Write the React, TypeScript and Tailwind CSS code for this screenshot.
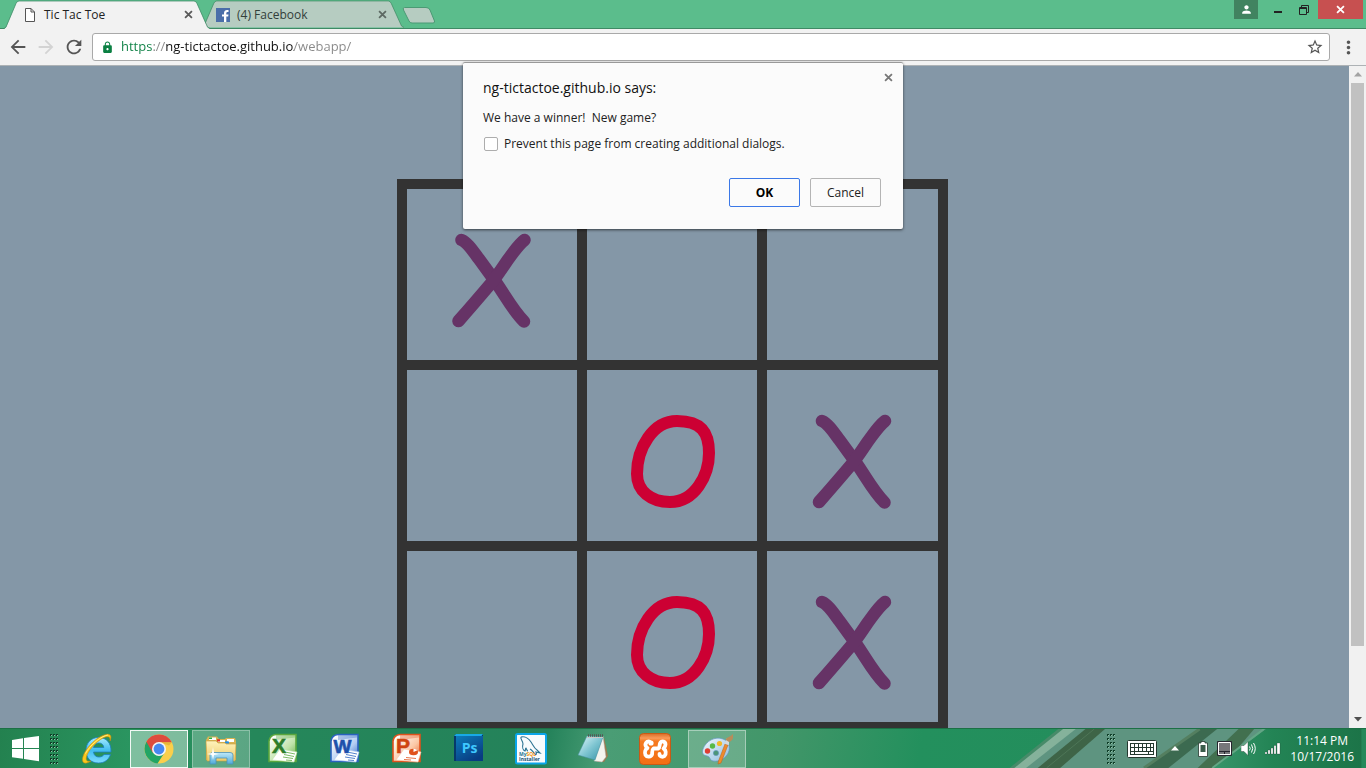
import { useState, type ReactNode } from "react";
import {
  MdArrowBack,
  MdArrowForward,
  MdLock,
  MdMoreVert,
  MdPerson,
  MdRefresh,
  MdStarBorder,
} from "react-icons/md";

type Mark = "X" | "O" | null;

const board: Mark[] = ["X", null, null, null, "O", "X", null, "O", "X"];

function CloseGlyph({ className }: { className?: string }) {
  return (
    <svg viewBox="0 0 10 10" className={className} fill="none" stroke="currentColor" aria-hidden="true">
      <path d="M1.2 1.2 8.8 8.8M8.8 1.2 1.2 8.8" />
    </svg>
  );
}

function TabShape({ active }: { active?: boolean }) {
  return (
    <svg
      viewBox="0 0 206 29"
      preserveAspectRatio="none"
      className="absolute inset-0 h-full w-full"
      aria-hidden="true"
    >
      <path
        d={active ? "M0 29 2 27.5 12 3.5Q13 1 15 1H190Q192 1 193 3.5L203.500 27.500 206 29Z" : "M0 28.500 2 27 12 3.5Q13 1 15 1H190Q192 1 193 3.5L203.500 27 206 28.500Z"}
        fill={active ? "#f2f2f2" : "#b6ccc1"}
      />
      <path d="M0 28.500 2 27 12 3.5Q13 1 15 1H190Q192 1 193 3.5L203.500 27 206 28.500" fill="none" stroke="#3f8a65" strokeOpacity="0.75" />
    </svg>
  );
}

function MarkDrawing({ mark }: { mark: Mark }) {
  if (mark === "X")
    return (
      <svg viewBox="0 0 170 171" className="h-full w-full" fill="none" stroke="#663366" strokeWidth="12.500" strokeLinecap="round" strokeLinejoin="round">
        <path d="M54.500 51C60 53 66 62 72 70L88 92C98 106 106 122 117 132.500" />
        <path d="M117.500 51C111 56 106 64 100 72C96 78 92 84 86 92C75 105 63 119 51.500 132" />
      </svg>
    );
  if (mark === "O")
    return (
      <svg viewBox="0 0 170 171" className="h-full w-full" fill="none" stroke="#cc0033" strokeWidth="12">
        <path d="M90 51C66 51 50 78 50 104C50 121 64 132 83 132C108 132 122 105 122 83C122 62 114 51 90 51Z" />
      </svg>
    );
  return null;
}

function WindowsLogo() {
  return (
    <svg viewBox="0 0 28 26" className="h-[26px] w-7" fill="#fff">
      <path d="M0 4 11 2.300V12H0ZM12 2.100 27 0V12H12ZM0 13H11V22.800L0 21.200ZM12 13H27V25.300L12 23Z" />
    </svg>
  );
}

function Icon({ children }: { children: ReactNode }) {
  return (
    <svg viewBox="0 0 32 32" className="size-8" aria-hidden="true">
      {children}
    </svg>
  );
}

function IeIcon() {
  return (
    <Icon>
      <defs>
        <linearGradient id="ie" x1="0" y1="0" x2="0" y2="1">
          <stop offset="0" stopColor="#a6ecff" />
          <stop offset="0.5" stopColor="#41bdf0" />
          <stop offset="1" stopColor="#7edcff" />
        </linearGradient>
      </defs>
      <path
        d="M30 19H12.500C13 22.500 15 24 18 24C20.500 24 22 23 23 21.500H29.500C27.500 27 23.500 30 17.500 30C10 30 5 25 5 17.500C5 10 10 4.500 17.500 4.500C25.500 4.500 30.500 10 30 19ZM12.500 14.500H22.800C22.500 11.500 20.500 10 17.800 10C15 10 13 11.500 12.500 14.500Z"
        fill="url(#ie)"
        stroke="#1c7fc0"
        strokeWidth="0.8"
      />
      <path d="M29 8C31 3 29.500 0.500 25 1.500C19 2.500 9 10 4 19C0 26 1 31 5.500 30C7 29.700 8.500 29 10 28C6 29 4 27.500 6 22C9 15 18 6 24.500 4C28 3 29.500 4.500 29 8Z" fill="#fbc91c" stroke="#c98c0b" strokeWidth="0.6" />
      <path d="M27 2C20 3 9 12 4.500 20.500" fill="none" stroke="#fff3a0" strokeWidth="0.8" />
    </Icon>
  );
}

function ChromeIcon() {
  return (
    <Icon>
      <circle cx="16" cy="16" r="14.500" fill="#fbcf4b" />
      <path d="M16 16 3.400 8.800A14.500 14.500 0 0 0 14.500 30.400L22 19Z" fill="#22a565" />
      <path d="M16 16 9.500 19.500 3.400 8.800A14.500 14.500 0 0 1 28.800 9.300H16Z" fill="#dd4b3e" />
      <path d="M16 9.300H28.800L26 12.500Z" fill="#d9a92f" opacity="0.6" />
      <circle cx="16" cy="16" r="7" fill="#f4f4f4" />
      <circle cx="16" cy="16" r="5.400" fill="#4688f1" />
    </Icon>
  );
}

function ExplorerIcon() {
  return (
    <Icon>
      <defs>
        <linearGradient id="folder" x1="0" y1="0" x2="0" y2="1">
          <stop offset="0" stopColor="#fff3bd" />
          <stop offset="1" stopColor="#eccb68" />
        </linearGradient>
        <linearGradient id="stand" x1="0" y1="0" x2="0" y2="1">
          <stop offset="0" stopColor="#bfe9f8" />
          <stop offset="1" stopColor="#4fa9d8" />
        </linearGradient>
      </defs>
      <path d="M1 7 3 3.500H12L14 6H20L21 5H30L31 8V27H1Z" fill="#d8b453" />
      <path d="M4 4.500H11V7H4ZM13 7H20V9H13ZM22 6H29V9H22Z" fill="#fff" />
      <path d="M4 4.500H7V6H4Z" fill="#2bb33c" />
      <path d="M12 6.500H15V8H12Z" fill="#dc3527" />
      <path d="M20 8.500H23V10H20Z" fill="#288ee0" />
      <path d="M1 8H11L13 10H20L21 11H31L30 28H2Z" fill="url(#folder)" stroke="#c79e3c" strokeWidth="0.6" />
      <path d="M12 6.500H15V8.500H12Z" fill="#dc3527" />
      <path d="M21 8.500H24V10.500H21Z" fill="#288ee0" />
      <path d="M5 31V22Q5 19.500 8 19.500H25Q28 19.500 28 22V31H22V25H11V31Z" fill="url(#stand)" stroke="#4b92b8" strokeWidth="0.8" />
      <path d="M8 14 9 20 14 21 9 22 8 27 7 22 2 21 7 20Z" fill="#fff" />
    </Icon>
  );
}

function OfficeIcon({ letter, dark, light, pale }: { letter: string; dark: string; light: string; pale: string }) {
  return (
    <Icon>
      <defs>
        <linearGradient id={`office-${letter}`} x1="0" y1="0" x2="1" y2="1">
          <stop offset="0.1" stopColor="#fff" />
          <stop offset="0.6" stopColor={pale} />
          <stop offset="1" stopColor={light} />
        </linearGradient>
      </defs>
      <path d="M9 1.500H29V28.500H2V8Q3 2 9 1.500Z" fill={`url(#office-${letter})`} stroke={light} strokeWidth="1.600" />
      <path d="M9 2H28V4.500L9 7Z" fill={light} opacity="0.35" />
      <path d="M13 16 30 19 27 29 5 27Z" fill="#fff" stroke={pale} strokeWidth="0.6" />
      {letter === "P" ? (
        <g>
          <ellipse cx="22.500" cy="19" rx="4.500" ry="3.300" fill={light} />
          <path d="M22.500 19V15.500L27 17Z" fill="#fff" />
          <path d="M15 24.500 25 25.500M13 26.500 20 27" stroke={light} strokeWidth="0.8" />
        </g>
      ) : (
        <path d="M18 19 28 21M17 21.500 27 23.500M16 24 26 25.500M19 27 25 27.500" stroke={light} strokeWidth="0.8" fill="none" />
      )}
      <text
        x={letter === "W" ? 13.5 : 12}
        y="20"
        textAnchor="middle"
        fontFamily="Liberation Sans, sans-serif"
        fontWeight="700"
        fontSize={letter === "W" ? 19 : 21}
        fill={dark}
        stroke={dark}
        strokeWidth="0.6"
      >
        {letter}
      </text>
    </Icon>
  );
}

function PhotoshopIcon() {
  return (
    <Icon>
      <defs>
        <linearGradient id="ps" x1="0" y1="0" x2="0.6" y2="1">
          <stop offset="0" stopColor="#0d7cba" />
          <stop offset="1" stopColor="#083c82" />
        </linearGradient>
      </defs>
      <path d="M1 3 3 1H30V26L28 28H1Z" fill="#06396b" />
      <path d="M1 3 3 1H30L28.500 3Z" fill="#18a9e6" />
      <path d="M3 3H30V28H3Z" fill="url(#ps)" />
      <text x="16.500" y="20" textAnchor="middle" fontFamily="Open Sans, sans-serif" fontWeight="700" fontSize="14" fill="#3fc8ff">
        Ps
      </text>
    </Icon>
  );
}

function MySqlIcon() {
  return (
    <Icon>
      <rect x="1" y="1" width="30" height="29.500" rx="1.500" fill="#f7fbfd" stroke="#0aa5e8" strokeWidth="2" />
      <path d="M6 4C10 3 14 6 16 9C18 12 19 15 22 17L25 20L21 19C22 21 21 22 20 21C18 19 17 17 15 16M6 4C5 6 8 8 8 11C7 14 8 17 10 18C11 17 10 15 11 15C12 17 12 18 13 18" fill="none" stroke="#2b7393" strokeWidth="1.100" />
      <text x="4" y="23" fontFamily="Open Sans, sans-serif" fontWeight="700" fontSize="5" fill="#2b7393">
        My<tspan fill="#f29111">SQL</tspan>
      </text>
      <text x="4" y="28" fontFamily="Open Sans, sans-serif" fontWeight="700" fontSize="5" fill="#174f72">
        Installer
      </text>
    </Icon>
  );
}

function NotepadIcon() {
  return (
    <Icon>
      <defs>
        <linearGradient id="note" x1="0" y1="0" x2="1" y2="1">
          <stop offset="0" stopColor="#e4f8fb" />
          <stop offset="0.5" stopColor="#80c6d2" />
          <stop offset="1" stopColor="#3593a8" />
        </linearGradient>
      </defs>
      <path d="M27 4 31 23 27 29 20 29Z" fill="#9b7a4c" />
      <path d="M26 3 29 24 25 29 17 28Z" fill="#f4f4ee" stroke="#a9aaa6" strokeWidth="0.5" />
      <path d="M10 3 26 4 18 27 1 22Z" fill="url(#note)" stroke="#46919d" strokeWidth="0.5" />
      <path d="M11 2.500H27" stroke="#555" strokeWidth="2.500" strokeDasharray="1 1" />
      <path d="M10 4.500H26" stroke="#c8c8c4" strokeWidth="1" />
    </Icon>
  );
}

function XamppIcon() {
  return (
    <Icon>
      <defs>
        <linearGradient id="xampp" x1="0" y1="0" x2="0" y2="1">
          <stop offset="0" stopColor="#d96c26" />
          <stop offset="0.15" stopColor="#fa9a58" />
          <stop offset="0.25" stopColor="#f57a20" />
          <stop offset="1" stopColor="#f36f13" />
        </linearGradient>
      </defs>
      <rect x="0.500" y="0.500" width="31" height="31" rx="4" fill="url(#xampp)" stroke="#c85a15" />
      <path
        d="M10.500 8.500C7.500 8 5.500 11 7 13.500C7.500 14.500 8.500 15 8.500 15C6 16.500 5.500 19.500 6.500 22C8 24.500 12 24 13 21.500C13.500 19.500 12.500 17 14.500 15.500H19.500C21 15 20 11.500 21.500 9.500C23 7.500 26.500 8.500 26.500 11.500C26.500 13.500 25.500 14.500 24.500 15.500C27 17 27.500 21 25.500 23C23.500 24.500 20.500 23.500 20.500 21"
        fill="none"
        stroke="#fff"
        strokeWidth="3.800"
        strokeLinecap="round"
        strokeLinejoin="round"
      />
      <circle cx="12" cy="10" r="2.600" fill="#fff" />
    </Icon>
  );
}

function PaintIcon() {
  return (
    <Icon>
      <defs>
        <linearGradient id="palette" x1="0" y1="0" x2="1" y2="1">
          <stop offset="0" stopColor="#f3faff" />
          <stop offset="1" stopColor="#8fbddf" />
        </linearGradient>
      </defs>
      <path d="M2 16C5 8 14 3 22 6C29 8 30 17 26 22C23 26 18 29 12 28C8 27 10 24 6 23C1 22 1 19 2 16Z" fill="url(#palette)" stroke="#5f93bd" strokeWidth="0.7" />
      <circle cx="15" cy="20" r="2.600" fill="#4d9678" stroke="#5f93bd" strokeWidth="0.6" />
      <circle cx="6.500" cy="18" r="2.700" fill="#df3d32" />
      <circle cx="11.500" cy="13" r="2.700" fill="#57b947" />
      <circle cx="18.500" cy="10.500" r="2.600" fill="#f2b92b" />
      <path d="M24 11 27 12 20 30 17 31 17.500 28Z" fill="#ee8a2c" stroke="#b9601b" strokeWidth="0.5" />
      <path d="M24 11 26 5 28 5 28 12Z" fill="#d5dade" />
      <path d="M25 7C25 4 28 5 32 1C33 5 31 8 28 9Z" fill="#b98c5a" />
    </Icon>
  );
}

const apps: { name: string; icon: ReactNode; look: string }[] = [
  { name: "Internet Explorer", icon: <IeIcon />, look: "border-transparent" },
  { name: "Google Chrome", icon: <ChromeIcon />, look: "border-white/90 bg-white/40" },
  { name: "File Explorer", icon: <ExplorerIcon />, look: "border-white/30 bg-white/25" },
  { name: "Excel", icon: <OfficeIcon letter="X" dark="#2d7d2b" light="#5aa73d" pale="#bfe3a9" />, look: "border-transparent" },
  { name: "Word", icon: <OfficeIcon letter="W" dark="#1d50ab" light="#2a62c0" pale="#b3cdf3" />, look: "border-transparent" },
  { name: "PowerPoint", icon: <OfficeIcon letter="P" dark="#cf4410" light="#e0521c" pale="#fbc7a4" />, look: "border-transparent" },
  { name: "Photoshop", icon: <PhotoshopIcon />, look: "border-transparent" },
  { name: "MySQL Installer", icon: <MySqlIcon />, look: "border-transparent" },
  { name: "Notepad", icon: <NotepadIcon />, look: "border-transparent" },
  { name: "XAMPP", icon: <XamppIcon />, look: "border-transparent" },
  { name: "Paint", icon: <PaintIcon />, look: "border-white/40 bg-white/20" },
];

function Grip() {
  return (
    <svg viewBox="0 0 9 32" className="h-8 w-[9px]" aria-hidden="true">
      {[0, 4, 8, 12, 16, 20, 24, 28].map((y) =>
        [0, 3, 6].map((x) => (
          <g key={`${x}-${y}`}>
            <rect x={x} y={y + 1} width="2" height="2" fill="#0f3d28" />
            <rect x={x + 1} y={y + 2} width="1" height="1" fill="#8fc4a8" />
          </g>
        )),
      )}
    </svg>
  );
}

function TrayWallpaper() {
  return (
    <svg viewBox="0 0 366 40" className="absolute right-0 top-0 h-full w-[366px]" aria-hidden="true">
      <defs>
        <linearGradient id="trayEnd" x1="0" y1="0" x2="1" y2="0">
          <stop offset="0" stopColor="#37956a" />
          <stop offset="0.4" stopColor="#238455" />
          <stop offset="1" stopColor="#1c7448" />
        </linearGradient>
      </defs>
      <path d="M10 40 60 0H270L214 40Z" fill="#5e9480" />
      <path d="M8 40 58 0H73L22 40Z" fill="#85b29b" />
      <path d="M5 40 55 0H60L10 40Z" fill="#478b69" />
      <path d="M34 40 83 0H103L57 40Z" fill="#3e6447" />
      <path d="M43 40 92 0" stroke="#4e7657" />
      <path d="M143 40 200 0H218L168 40Z" fill="#3c6a50" />
      <path d="M143 40 200 0" stroke="#547f60" strokeWidth="3" />
      <path d="M198 40 240 0H256L222 40Z" fill="#42704f" />
      <path d="M214 40 268 0H366V40Z" fill="url(#trayEnd)" />
      <path d="M213 40 266 0" stroke="#62a785" strokeWidth="2" />
    </svg>
  );
}

export default function App() {
  const [prevent, setPrevent] = useState(false);
  const [url, setUrl] = useState("https://ng-tictactoe.github.io/webapp/");

  return (
    <div className="relative flex h-screen flex-col overflow-hidden font-['Open_Sans','Noto_Sans',sans-serif] text-xs text-[#222]">
      <header className="flex h-[29px] shrink-0 items-start justify-between border-b border-[#3f8a65] bg-[#5bbd8c]">
        <div className="flex pl-1" role="tablist">
          <div role="tab" aria-selected="true" className="relative z-10 flex h-[29px] w-[206px]">
            <TabShape active />
            <div className="relative flex h-[29px] w-full items-center pl-[21px] pr-[17px]">
              <svg viewBox="0 0 10 14" className="h-[14px] w-[10px]" fill="#fff" stroke="#555" aria-hidden="true">
                <path d="M0.500 0.500H6L9.500 4V13.500H0.500ZM6 0.500V4H9.500" />
              </svg>
              <span className="ml-[9px] grow">Tic Tac Toe</span>
              <button aria-label="Close tab" className="text-[#5a5a5a]">
                <CloseGlyph className="size-[9px] stroke-2" />
              </button>
            </div>
          </div>
          <div role="tab" aria-selected="false" className="relative -ml-2 flex h-7 w-[202px]">
            <TabShape />
            <div className="relative flex h-[29px] w-full items-center pl-[14px] pr-[17px]">
              <svg viewBox="0 0 14 14" className="size-[14px]" aria-hidden="true">
                <path d="M0 0H14V14H0Z" fill="#4a6ea9" />
                <path d="M8 14V8.500H6V6.500H8V5C8 3 9.500 2 11 2H12.500V4H11.500Q10.300 4 10.300 5.200V6.500H12.500L12.200 8.500H10.300V14Z" fill="#fff" />
              </svg>
              <span className="ml-[7px] grow text-[#33403a]">(4) Facebook</span>
              <button aria-label="Close tab" className="text-[#5d6963]">
                <CloseGlyph className="size-[9px] stroke-2" />
              </button>
            </div>
          </div>
          <button aria-label="New tab" className="-ml-[2px] mt-[7px] h-[17px] w-[34px]">
            <svg viewBox="0 0 34 17" className="h-full w-full">
              <path d="M2.500 0.500H24Q27 0.500 28 3L32.500 14Q33 16 31 16H10Q8 16 7 14L1.500 3Q0.500 0.500 2.500 0.500Z" fill="#b6ccc1" stroke="#4b9a74" />
            </svg>
          </button>
        </div>
        <div className="flex h-[19px] items-stretch pr-[3px]">
          <button aria-label="Profile" className="flex w-6 items-center justify-center bg-[#418360] text-white">
            <MdPerson className="size-[13px]" />
          </button>
          <button aria-label="Minimize" className="ml-4 flex w-2 items-end pb-[6px]">
            <span className="h-[2px] w-2 bg-[#222]" />
          </button>
          <button aria-label="Restore" className="ml-[17px] mr-[9px] flex items-center">
            <svg viewBox="0 0 10 10" className="size-[10px]" fill="none" stroke="#222">
              <path d="M0.500 2.500H7.500V9.500H0.500ZM0 3.500H8M2.500 2.500V0.500H9.500V7.500H7.500" />
            </svg>
          </button>
          <button aria-label="Close" className="flex w-[45px] items-center justify-center bg-[#c75050] text-white">
            <CloseGlyph className="size-[9px] stroke-2" />
          </button>
        </div>
      </header>

      <div className="flex h-[37px] shrink-0 items-center border-b border-[#adb2b5] bg-[#f2f2f2] pl-[7px] pr-[7px] text-[#555]">
        <button aria-label="Back"><MdArrowBack className="size-[22px]" /></button>
        <button aria-label="Forward" className="ml-[6px] text-[#d3d3d3]"><MdArrowForward className="size-[22px]" /></button>
        <button aria-label="Reload" className="ml-[6px]"><MdRefresh className="size-[22px]" /></button>
        <div className="ml-[7px] flex h-7 grow items-center rounded-[3px] border border-[#a9a9a9] bg-white pl-2 pr-[5px]">
          <MdLock className="size-[13px] text-[#0b8043]" />
          <input
            aria-label="Address"
            value={url}
            onChange={(e) => setUrl(e.target.value)}
            className="ml-[7px] grow bg-[linear-gradient(to_right,#0b8043_32px,#888_32px,#888_45px,#111_45px,#111_173px,#888_173px)] bg-clip-text text-[13px] text-transparent outline-none"
          />
          <button aria-label="Bookmark"><MdStarBorder className="size-[18px]" /></button>
        </div>
        <button aria-label="Menu" className="ml-2"><MdMoreVert className="size-[21px]" /></button>
      </div>

      <div className="flex min-h-0 grow">
        <main className="flex grow justify-center overflow-hidden bg-[#8497a7] pr-1 pt-[113px]">
          <div className="grid h-[553px] w-[551px] shrink-0 grid-cols-[170px_170px_1fr] grid-rows-3 gap-[10px] bg-[#333] p-[10px]">
            {board.map((mark, i) => (
              <button key={i} aria-label={mark ? `Square ${i + 1}, ${mark}` : `Square ${i + 1}`} className="bg-[#8497a7]">
                <MarkDrawing mark={mark} />
              </button>
            ))}
          </div>
        </main>
        <div className="flex w-[17px] shrink-0 flex-col items-center bg-[#f1f1f1] py-[6px]" aria-hidden="true">
          <svg viewBox="0 0 8 5" className="h-[5px] w-2" fill="#a3a3a3"><path d="M4 0 8 4.500H0Z" /></svg>
          <div className="mt-[6px] h-[563px] w-[13px] bg-[#c1c1c1]" />
          <svg viewBox="0 0 8 5" className="mt-auto h-[5px] w-2" fill="#505050"><path d="M0 0H8L4 4.500Z" /></svg>
        </div>
      </div>

      <footer className="relative flex h-10 shrink-0 items-center justify-between border-t border-[#1c7045] bg-[linear-gradient(100deg,#23814f_0,#2a9560_130px,#25875a_250px,#24825a_540px,#4a9d75_600px,#429669_770px,#23905d_910px,#24895a_100%)]">
        <TrayWallpaper />
        <div className="relative flex items-center">
          <button aria-label="Start" className="ml-3"><WindowsLogo /></button>
          <div className="ml-[10px] mr-[7px]"><Grip /></div>
          <nav className="flex gap-1 pl-[2px]" aria-label="Taskbar">
            {apps.map((app) => (
              <button key={app.name} aria-label={app.name} className={`flex h-[38px] w-[58px] items-center justify-center border ${app.look}`}>
                {app.icon}
              </button>
            ))}
          </nav>
        </div>
        <div className="relative flex items-center pr-3 text-white">
          <Grip />
          <button aria-label="Touch keyboard" className="ml-[11px]">
            <svg viewBox="0 0 30 18" className="h-[18px] w-[30px]">
              <rect x="0.500" y="0.500" width="29" height="17" rx="1" fill="#fff" stroke="#24382f" />
              <path d="M3 3H27V15H3Z" fill="#24382f" />
              <path d="M4 5.500H26M4 9.500H26" stroke="#fff" strokeWidth="3" strokeDasharray="3 1" />
              <path d="M4 13H7M8 13H21M22 13H26" stroke="#fff" strokeWidth="2" />
            </svg>
          </button>
          <button aria-label="Show hidden icons" className="ml-[14px]">
            <svg viewBox="0 0 8 5" className="h-[5px] w-2" fill="#fff"><path d="M4 0 8 4.500H0Z" /></svg>
          </button>
          <svg viewBox="0 0 10 16" className="ml-[19px] h-4 w-[10px]" aria-label="Battery">
            <path d="M3 0.500H7V2H9.500V15.500H0.500V2H3Z" fill="#fff" stroke="#24382f" strokeWidth="0.8" />
            <path d="M2.500 4H7.500V11H2.500Z" fill="#3a5c4b" />
          </svg>
          <svg viewBox="0 0 15 15" className="ml-[9px] size-[15px]" aria-label="Touchpad">
            <path d="M0.500 0.500H14.500V14.500H0.500Z" fill="#666" stroke="#26262e" />
            <path d="M1.500 1.500H13.500V13.500H1.500Z" fill="#77777a" stroke="#fff" />
            <path d="M2 10.500H13M7.500 10.500V13" stroke="#26262e" />
          </svg>
          <svg viewBox="0 0 15 15" className="ml-[9px] size-[15px]" aria-label="Volume">
            <path d="M0 4.500H3L7 0.500V14.500L3 10.500H0Z" fill="#fff" stroke="#24382f" strokeWidth="0.4" />
            <path d="M8.500 5.500Q10 7.500 8.500 9.500M10.500 3.500Q13 7.500 10.500 11.500M12.500 2Q16 7.500 12.500 13" fill="none" stroke="#fff" />
          </svg>
          <svg viewBox="0 0 16 13" className="ml-[9px] h-[13px] w-4" fill="#fff" aria-label="Network">
            <path d="M0 10H2V12H0ZM3 8H5V12H3ZM6 6H8V12H6ZM9 3.500H11V12H9ZM12 1H15V12H12Z" stroke="#24382f" strokeWidth="0.3" />
          </svg>
          <time className="ml-[9px] text-center leading-4">
            11:14 PM
            <br />
            10/17/2016
          </time>
        </div>
      </footer>

      <div className="pointer-events-none absolute inset-x-0 top-[62px] z-20 flex justify-center">
        <section
          role="dialog"
          aria-labelledby="dialog-title"
          className="pointer-events-auto relative h-[167px] w-[440px] rounded-[2px] border-t border-[#999] bg-[#fbfbfb] px-5 pt-[15px] shadow-[0_1px_3px_rgba(0,0,0,0.6)]"
        >
          <button aria-label="Close dialog" className="absolute right-[10px] top-[10px] text-[#777]">
            <CloseGlyph className="size-[9px] stroke-2" />
          </button>
          <h1 id="dialog-title" className="text-sm text-[#111]">ng-tictactoe.github.io says:</h1>
          <p className="mt-3 whitespace-pre leading-4">We have a winner!  New game?</p>
          <label className="mt-[10px] flex h-4 items-center gap-[6px] pl-px leading-4">
            <input
              type="checkbox"
              checked={prevent}
              onChange={(e) => setPrevent(e.target.checked)}
              className="size-[14px] appearance-none rounded-[2px] border border-[#adadad] bg-white checked:bg-[#4285f4]"
            />
            Prevent this page from creating additional dialogs.
          </label>
          <div className="mt-[26px] flex justify-end gap-[10px] pr-[2px]">
            <button className="h-[29px] w-[71px] rounded-[2px] border border-[#3b78e7] font-bold text-black">OK</button>
            <button className="h-[29px] w-[71px] rounded-[2px] border border-[#b4b4b4]">Cancel</button>
          </div>
        </section>
      </div>
    </div>
  );
}
